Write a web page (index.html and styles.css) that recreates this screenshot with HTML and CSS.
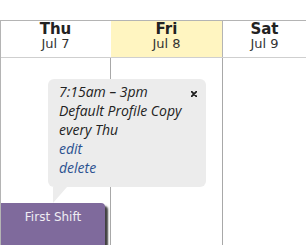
FILE: index.html
```html
<!DOCTYPE html>
<html>
<head>
<meta charset="utf-8">
<link rel="stylesheet" href="styles.css">
</head>
<body>
<div class="cal">
  <div class="head">
    <div class="day first">
      <div class="dname">Thu</div>
      <div class="ddate">Jul 7</div>
    </div>
    <div class="day today">
      <div class="dname">Fri</div>
      <div class="ddate">Jul 8</div>
    </div>
    <div class="day">
      <div class="dname">Sat</div>
      <div class="ddate">Jul 9</div>
    </div>
  </div>
  <div class="grid">
    <div class="col first">
      <div class="shift">First Shift</div>
    </div>
    <div class="col today-col"></div>
    <div class="col"></div>
  </div>
  <div class="popup">
    <svg class="close" width="6" height="6" viewBox="0 0 6 6"><path d="M0.5 0.5 L5.5 5.5 M5.5 0.5 L0.5 5.5" stroke="#1e1e1e" stroke-width="1.8" stroke-linecap="round"/></svg>
    <div class="line">7:15am – 3pm</div>
    <div class="line">Default Profile Copy</div>
    <div class="line">every Thu</div>
    <a class="line link" href="#">edit</a>
    <a class="line link" href="#">delete</a>
    <span class="tail"></span>
  </div>
</div>
</body>
</html>
```

FILE: styles.css
```css
html, body {
  margin: 0;
  padding: 0;
  background: #fff;
  width: 306px;
  height: 245px;
  overflow: hidden;
}
body {
  font-family: "DejaVu Sans", sans-serif;
}
.cal {
  position: relative;
  margin-top: 20px;
  border-top: 1px solid #b4b4b4;
  border-left: 1px solid #b4b4b4;
}
.head, .grid {
  display: grid;
  grid-template-columns: 110px 112px 1fr;
}
.head {
  height: 37px;
  border-bottom: 1px solid #cfcfcf;
  box-sizing: border-box;
}
.day {
  text-align: center;
  color: #222;
  border-right: 1px solid #b4b4b4;
}
.day:last-child { border-right: none; }
.day.first { border-right-color: #fff; }
.day.today { background: #fff5c1; }
.dname {
  font-weight: bold;
  font-size: 15px;
  line-height: 16px;
}
.ddate {
  font-size: 13px;
  line-height: 14px;
  color: #333;
}
.grid {
  height: 187px;
}
.col {
  border-right: 1px solid #a8a8a8;
}
.col:last-child { border-right: none; }
.shift {
  margin-top: 145px;
  width: 104px;
  height: 42px;
  background: #7f6a9c;
  border-top-right-radius: 4px;
  box-shadow: 3px 3px 2px rgba(0, 0, 0, 0.75);
  color: #efedf3;
  font-size: 12px;
  text-align: center;
  padding-top: 7px;
  line-height: 14px;
  box-sizing: border-box;
}
.popup {
  position: absolute;
  left: 47px;
  top: 58px;
  width: 158px;
  height: 108px;
  box-sizing: border-box;
  background: #ececec;
  border-radius: 6px;
  padding: 3px 11px 0 11px;
  font-family: "Open Sans", sans-serif;
  font-style: italic;
  font-size: 14px;
  line-height: 19px;
  color: #222;
}
.line {
  display: block;
  white-space: nowrap;
}
.link {
  color: #2b5190;
  text-decoration: none;
}
.close {
  position: absolute;
  left: 143px;
  top: 12px;
}
.tail {
  position: absolute;
  left: 5px;
  top: 108px;
  width: 0;
  height: 0;
  border-top: 16px solid #ececec;
  border-right: 14px solid transparent;
}
```
